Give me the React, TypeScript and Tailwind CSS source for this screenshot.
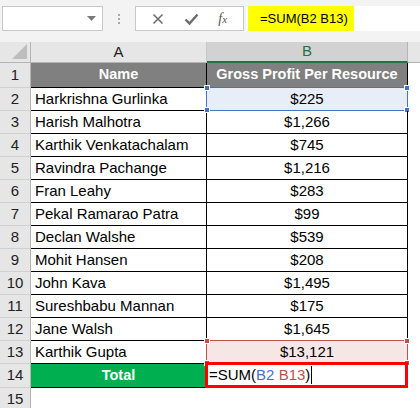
const rows: [string, string][] = [
  ['Harkrishna Gurlinka', '$225'],
  ['Harish Malhotra', '$1,266'],
  ['Karthik Venkatachalam', '$745'],
  ['Ravindra Pachange', '$1,216'],
  ['Fran Leahy', '$283'],
  ['Pekal Ramarao Patra', '$99'],
  ['Declan Walshe', '$539'],
  ['Mohit Hansen', '$208'],
  ['John Kava', '$1,495'],
  ['Sureshbabu Mannan', '$175'],
  ['Jane Walsh', '$1,645'],
  ['Karthik Gupta', '$13,121'],
];

function RowHead({ n, h = 'h-[23px]' }: { n: number; h?: string }) {
  return (
    <div
      className={`${h} w-[31px] shrink-0 flex items-center justify-center bg-[#e6e6e6] border-r border-r-[#b4b4b4] border-b border-b-[#d0d0d0] text-[15px] text-[#222]`}
    >
      {n}
    </div>
  );
}

function Handle({ pos, color }: { pos: string; color: string }) {
  return <div className={`absolute w-[6px] h-[6px] ${pos} ${color} border border-white`} />;
}

export default function App() {
  return (
    <div
      className="w-[420px] h-[408px] overflow-hidden bg-white text-black"
      style={{ fontFamily: '"Liberation Sans", Arial, sans-serif' }}
    >
      {/* formula bar */}
      <div className="h-[42px] bg-[#f3f3f3] pt-[6px] flex items-start">
        <div className="ml-[2px] w-[101px] h-[25px] bg-white border border-[#c8c8c8] flex items-center justify-end pr-[6px]">
          <svg width="9" height="5" viewBox="0 0 9 5">
            <path d="M0 0h9L4.5 5z" fill="#7a7a7a" />
          </svg>
        </div>
        <div className="w-[32px] h-[25px] flex flex-col items-center justify-center gap-[2px]">
          <span className="w-[2px] h-[2px] bg-[#a8a8a8]" />
          <span className="w-[2px] h-[2px] bg-[#a8a8a8]" />
          <span className="w-[2px] h-[2px] bg-[#a8a8a8]" />
        </div>
        <div className="w-[109px] h-[25px] bg-white border border-[#c8c8c8] flex items-center justify-around px-[6px]">
          <svg width="12" height="12" viewBox="0 0 12 12">
            <path d="M1.5 1.5l9 9M10.5 1.5l-9 9" stroke="#6b6b6b" strokeWidth="1.5" />
          </svg>
          <svg width="15" height="12" viewBox="0 0 15 12">
            <path d="M1.5 6.5l4 4L13.5 1.5" stroke="#6b6b6b" strokeWidth="2.4" fill="none" />
          </svg>
          <span
            className="text-[14px] text-[#555] italic"
            style={{ fontFamily: '"Liberation Serif", serif' }}
          >
            f<span className="text-[11px]">x</span>
          </span>
        </div>
        <div className="ml-[2px] flex-1 h-[25px] bg-white flex items-center">
          <div className="ml-[2px] w-[106px] h-[25px] bg-[#ffff00] flex items-center pl-[12px] text-[13px] whitespace-nowrap">
            =SUM(B2 B13)
          </div>
        </div>
      </div>

      {/* column headers */}
      <div className="flex h-[21px] bg-[#f3f3f3]">
        <div className="w-[31px] h-[21px] bg-[#e6e6e6] border-r border-r-[#b4b4b4] border-b border-b-[#b4b4b4] flex items-end justify-end p-[3px]">
          <svg width="15" height="15" viewBox="0 0 15 15">
            <path d="M15 0V15H0z" fill="#bdbdbd" />
          </svg>
        </div>
        <div className="w-[176px] h-[21px] bg-[#e6e6e6] border-r border-r-[#c8c8c8] border-b border-b-[#b4b4b4] flex items-center justify-center text-[15px] text-[#222]">
          A
        </div>
        <div className="w-[201px] h-[21px] bg-[#d2d2d2] border-r border-r-[#b4b4b4] border-b-2 border-b-[#217346] flex items-center justify-center text-[15px] text-[#217346]">
          B
        </div>
        <div className="flex-1 h-[21px] bg-[#e6e6e6] border-b border-b-[#b4b4b4]" />
      </div>

      {/* row 1 */}
      <div className="flex">
        <RowHead n={1} h="h-[25px]" />
        <div className="w-[176px] h-[25px] bg-[#808080] border-r border-b border-black flex items-center justify-center text-white font-bold text-[14.5px]">
          Name
        </div>
        <div className="w-[201px] h-[25px] bg-[#808080] border-r border-b border-black flex items-center justify-center text-white font-bold text-[14.5px] whitespace-nowrap">
          Gross Profit Per Resource
        </div>
      </div>

      {rows.map(([name, val], i) => {
        const r = i + 2;
        const isB2 = r === 2;
        const isB13 = r === 13;
        return (
          <div key={r} className="flex">
            <RowHead n={r} />
            <div className="w-[176px] h-[23px] border-r border-b border-black flex items-center pl-[4px] text-[15px] whitespace-nowrap">
              {name}
            </div>
            <div
              className={`relative w-[201px] h-[23px] border-r border-b border-black flex items-center justify-center text-[15px] ${
                isB2 ? 'bg-[#e8eef8]' : isB13 ? 'bg-[#f7e6e6]' : ''
              }`}
            >
              {isB2 && (
                <>
                  <div className="absolute -left-[1px] -top-[1px] -right-[1px] -bottom-[1px] border-[1.5px] border-[#4472c4]" />
                  <Handle pos="-left-[3px] -top-[3px]" color="bg-[#4472c4]" />
                  <Handle pos="-right-[3px] -top-[3px]" color="bg-[#4472c4]" />
                  <Handle pos="-left-[3px] -bottom-[3px]" color="bg-[#4472c4]" />
                  <Handle pos="-right-[3px] -bottom-[3px]" color="bg-[#4472c4]" />
                </>
              )}
              {isB13 && (
                <>
                  <div className="absolute -left-[1px] -top-[1px] -right-[1px] -bottom-[1px] border-[1.5px] border-[#c0504d]" />
                  <Handle pos="-left-[3px] -top-[3px]" color="bg-[#c0504d]" />
                  <Handle pos="-right-[3px] -top-[3px]" color="bg-[#c0504d]" />
                  <Handle pos="-left-[3px] -bottom-[3px]" color="bg-[#c0504d]" />
                  <Handle pos="-right-[3px] -bottom-[3px]" color="bg-[#c0504d]" />
                </>
              )}
              <span className="relative">{val}</span>
            </div>
          </div>
        );
      })}

      {/* row 14 */}
      <div className="flex">
        <RowHead n={14} h="h-[24px]" />
        <div className="w-[176px] h-[24px] bg-[#00b050] border-r border-b border-black flex items-center justify-center text-white font-bold text-[14.5px]">
          Total
        </div>
        <div className="w-[201px] h-[24px] relative border-r border-b border-black">
          <div className="absolute -left-[2px] -top-[2px] -right-[1px] -bottom-[1px] border-[3px] border-[#ff0000] flex items-center pl-[1px] text-[15px] whitespace-nowrap">
            <span>=SUM(</span>
            <span className="text-[#4472c4]">B2</span>
            <span>&nbsp;</span>
            <span className="text-[#c0504d]">B13</span>
            <span>)</span>
            <span className="w-[1px] h-[18px] bg-black ml-[1px]" />
          </div>
        </div>
      </div>

      {/* row 15 */}
      <div className="flex">
        <RowHead n={15} />
      </div>
    </div>
  );
}
